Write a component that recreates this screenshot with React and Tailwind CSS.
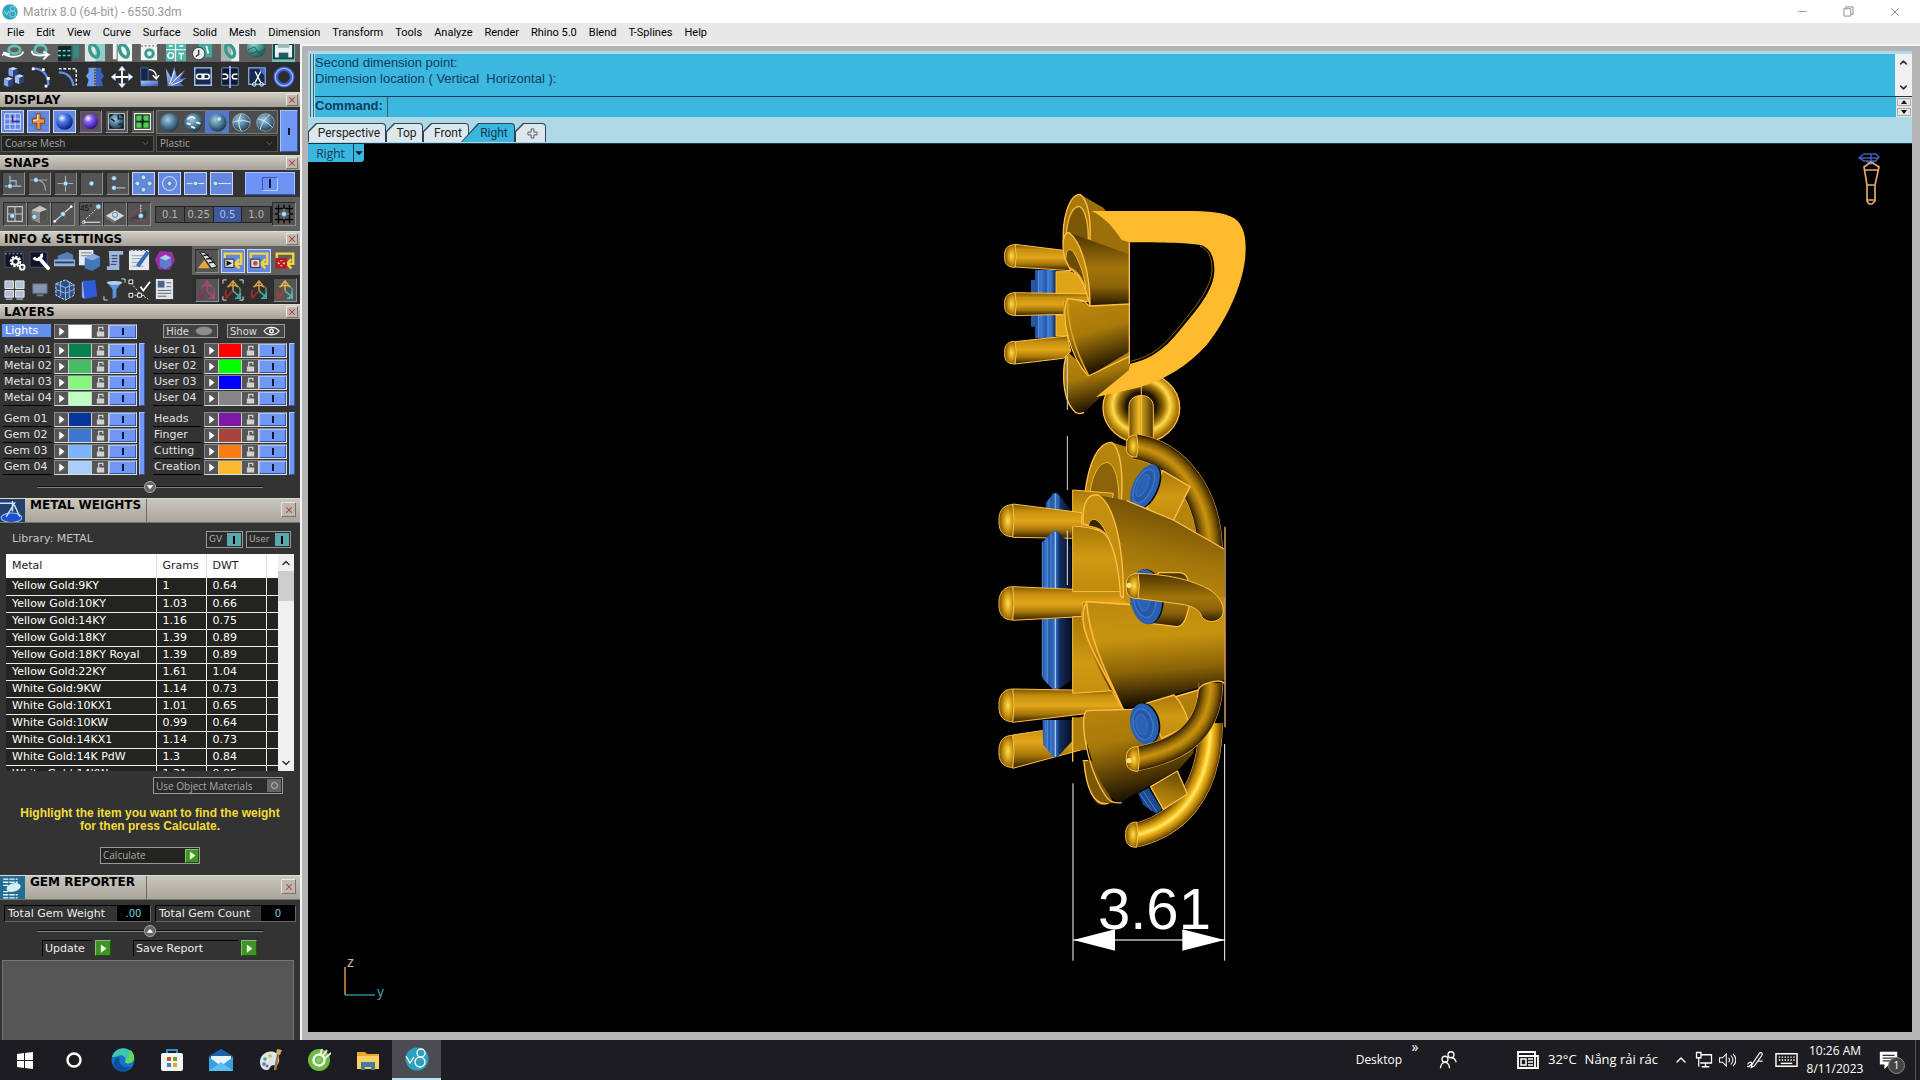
import React from 'react';
import clsx from 'clsx';
import { ChevronUp, ChevronDown, Minus, X } from 'lucide-react';

const menus = ['File', 'Edit', 'View', 'Curve', 'Surface', 'Solid', 'Mesh', 'Dimension', 'Transform', 'Tools', 'Analyze', 'Render', 'Rhino 5.0', 'Blend', 'T-Splines', 'Help'];

const metals = [
    ['Yellow Gold:9KY', '1', '0.64'],
    ['Yellow Gold:10KY', '1.03', '0.66'],
    ['Yellow Gold:14KY', '1.16', '0.75'],
    ['Yellow Gold:18KY', '1.39', '0.89'],
    ['Yellow Gold:18KY Royal', '1.39', '0.89'],
    ['Yellow Gold:22KY', '1.61', '1.04'],
    ['White Gold:9KW', '1.14', '0.73'],
    ['White Gold:10KX1', '1.01', '0.65'],
    ['White Gold:10KW', '0.99', '0.64'],
    ['White Gold:14KX1', '1.14', '0.73'],
    ['White Gold:14K PdW', '1.3', '0.84'],
    ['White Gold:14KW', '1.31', '0.85'],
];

const layerGroups = [
    [['Metal 01', 'bg-[#088050]'], ['Metal 02', 'bg-[#45bd62]'], ['Metal 03', 'bg-[#86f77a]'], ['Metal 04', 'bg-[#bfffc0]']],
    [['User 01', 'bg-[#ff0000]'], ['User 02', 'bg-[#00ff00]'], ['User 03', 'bg-[#0000f8]'], ['User 04', 'bg-[#858585]']],
    [['Gem 01', 'bg-[#06349a]'], ['Gem 02', 'bg-[#3c78d2]'], ['Gem 03', 'bg-[#7ab5fc]'], ['Gem 04', 'bg-[#aacdfc]']],
    [['Heads', 'bg-[#7c18a8]'], ['Finger', 'bg-[#a84440]'], ['Cutting', 'bg-[#f87c14]'], ['Creation', 'bg-[#fdb92c]']],
];

const Icon = ({ children, className = 'size-6' }) => (
    <svg viewBox="0 0 24 24" className={clsx('shrink-0', className)} fill="none" aria-hidden="true">{children}</svg>
);

const Dot = ({ x, y, r = 2.8 }) => <circle cx={x} cy={y} r={r} fill="#b5e4fa" stroke="#31586f" strokeWidth=".7" />;

const Ball = ({ children, fill = 'url(#steelBall)' }) => (
    <>
        <circle cx="12" cy="12" r="10.500" fill={fill} />
        {children}
    </>
);

// shared paints for the small toolbar icons
const IconPaints = () => (
    <svg className="absolute size-0" aria-hidden="true">
        <defs>
            <radialGradient id="steelBall" cx=".4" cy=".35" r=".7"><stop offset="0" stopColor="#a6cce0" /><stop offset=".5" stopColor="#527f9d" /><stop offset="1" stopColor="#19303f" /></radialGradient>
            <radialGradient id="blueBall" cx=".35" cy=".3" r=".75"><stop offset="0" stopColor="#fff" /><stop offset=".35" stopColor="#4a7af0" /><stop offset="1" stopColor="#081a70" /></radialGradient>
            <radialGradient id="violetBall" cx=".35" cy=".3" r=".75"><stop offset="0" stopColor="#fff" /><stop offset=".35" stopColor="#8a60f8" /><stop offset="1" stopColor="#2a0a90" /></radialGradient>
            <radialGradient id="tealBall" cx=".35" cy=".3" r=".8"><stop offset="0" stopColor="#8fd5cd" /><stop offset="1" stopColor="#0d4f4c" /></radialGradient>
            <linearGradient id="blueFace" x1="0" y1="0" x2="1" y2="1"><stop offset="0" stopColor="#a8c8fc" /><stop offset="1" stopColor="#3258b8" /></linearGradient>
        </defs>
    </svg>
);

const TealRing = ({ cx = 14 }) => (
    <ellipse cx={cx} cy="7" rx="4" ry="7" transform={`rotate(-25 ${cx} 8)`} stroke="#3a9a92" strokeWidth="3.5" />
);

const fileIcons = [
    ['Rotate ring', <><ellipse cx="13" cy="6" rx="6" ry="4" stroke="#5fc0b4" strokeWidth="3" /><path d="M2 8c0 7 19 7 20 0M3 9l-3 3M3 9l5 2" stroke="#fff" strokeWidth="2" /></>],
    ['Turn ring', <><ellipse cx="12" cy="6" rx="6" ry="5" stroke="#5fc0b4" strokeWidth="3" /><path d="M3 7c0 5 6 6 17 4l-5-3m5 3l-5 5" stroke="#fff" strokeWidth="2" /></>],
    ['Animation', <><path d="M2 2h14v16H2z" fill="#0c2b2b" /><path d="M2 7h14M2 12h14" stroke="#76d8cc" strokeWidth="1.5" strokeDasharray="3 2" /><path d="M18 1h6v14h-6z" fill="#2f8d87" /></>],
    ['New view', <><path d="M2 0h21v18H2z" fill="#8ed0c8" /><path d="M2 0h11v18H2z" fill="#dde5e3" /><TealRing cx={12} /></>],
    ['Views', <><path d="M3 0h4v16H3zM8 0h15v18H8z" fill="#eef5f3" /><TealRing cx={15} /></>],
    ['Page', <><path d="M4 0h17v17H4z" fill="#eef5f3" /><path d="M4 2h17" stroke="#444" strokeDasharray="2 2" /><ellipse cx="13" cy="10" rx="4" ry="4" stroke="#3a9a92" strokeWidth="3" /></>],
    ['Layout', <><path d="M2 0h21v18H2z" fill="#4fb5aa" /><path d="M2 6h21M12 0v18" stroke="#fff" strokeWidth="1.3" /><circle cx="7" cy="12" r="3" stroke="#fff" strokeWidth="1.5" /><path d="M15 10h6M18 10v6M5 2h4M16 2h4" stroke="#fff" strokeWidth="1.5" /></>],
    ['History', <><path d="M8 0h14v14H8z" fill="#3fa79c" /><circle cx="8" cy="10" r="6.5" fill="#e7eceb" stroke="#333" /><path d="M8 6v5l-3 2" stroke="#333" strokeWidth="1.4" /><path d="M16 2l2 8" stroke="#fff" strokeWidth="2" /></>],
    ['Catalog', <><path d="M3 0h19v18H3z" fill="#a9b6b4" /><path d="M14 0h8v18h-8z" fill="#e8efee" /><TealRing cx={13} /></>],
    ['Sphere', <><circle cx="12" cy="4" r="10" fill="url(#tealBall)" /><path d="M3 6l7-3 4 6 7-4M5 10l8-2 5 4" stroke="#0f5350" strokeWidth=".8" /></>],
    ['Save', <><path d="M0 0h24v20H0z" fill="#6ec2b8" /><path d="M2 0h20v15H2z" fill="#e6f4f2" stroke="#0e3c3c" strokeWidth="2" /><path d="M6 0h12v4H6z" fill="#9ab8b5" /><path d="M7 9h10v6H7z" fill="#1d5f5b" /></>],
];

const Cube = ({ x, y, c = '#7ea8f0' }) => (
    <g transform={`translate(${x} ${y})`}>
        <path d="M0 2l5-2 5 2-5 2z" fill="#c5d9fa" />
        <path d="M0 2l5 2v7l-5-2z" fill={c} />
        <path d="M10 2L5 4v7l5-2z" fill="#27438c" />
    </g>
);

const editIcons = [
    ['Blocks', <><Cube x={6} y={1} /><Cube x={1} y={12} /><Cube x={13} y={9} c="#a9bfe0" /></>],
    ['Arc', <><path d="M3 3c10-1 17 6 17 18" stroke="#5e90f4" strokeWidth="2.5" /><path d="M2 3h3M13 4h3M20 12v3M16 22h3" stroke="#fff" strokeWidth="3" /></>],
    ['Corner', <><path d="M2 3h19v18" stroke="#fff" strokeWidth="1.6" strokeDasharray="3 2" /><path d="M2 7c9 0 15 6 16 15" stroke="#5e90f4" strokeWidth="2.5" /></>],
    ['Mirror', <><path d="M11 2H5v5L2 11l3 4-2 7h8z" fill="#6f9cf7" /><path d="M13 2h6v5l3 4-3 4 2 7h-8z" fill="#3a60bc" /><path d="M12 2v20" stroke="#fff" strokeDasharray="2 1" /></>],
    ['Move', <><path d="M12 2v20M2 12h20" stroke="#fff" strokeWidth="2" /><path d="M12 0l4 5H8zM12 24l4-5H8zM0 12l5-4v8zM24 12l-5-4v8z" fill="#fff" stroke="#6f9cf7" strokeWidth=".5" /></>],
    ['Rotate', <><path d="M3 2h8v15H3z" fill="#14264e" stroke="#5c84dc" strokeWidth=".7" /><path d="M3 16h19v6H3z" fill="url(#blueFace)" /><path d="M12 4c5 0 8 3 8 9M16 10l4 4 3-4" stroke="#fff" strokeWidth="1.5" /></>],
    ['Explode', <><path d="M3 22L1 3l6 10L10 1l3 11 9-8-6 10 8-1-8 5 5 4z" fill="url(#blueFace)" /><path d="M5 20l5-14M6 20l12-12M7 21l12-5" stroke="#fff" strokeWidth="1" /></>],
    ['Join', <><path d="M3 2h18v19H3z" fill="#16284c" stroke="#a8c4fa" strokeWidth="1.5" /><rect x="5" y="9" width="8" height="5" rx="2.5" stroke="#fff" strokeWidth="1.7" /><rect x="11" y="9" width="8" height="5" rx="2.5" stroke="#fff" strokeWidth="1.7" /></>],
    ['Split', <><path d="M3 2h18v19H3z" fill="#0d182e" stroke="#7590c8" /><path d="M12 0v24" stroke="#8fb2fc" strokeWidth="2" /><path d="M4 9h3a2.5 2.5 0 010 5H4M20 9h-3a2.5 2.5 0 000 5h3" stroke="#fff" strokeWidth="1.7" /></>],
    ['Trim', <><path d="M3 2h18v18H3z" fill="#16284c" stroke="#8fb2fc" strokeWidth="1.3" /><path d="M14 3h7v9z" fill="#4c74ce" /><path d="M10 6l6 12M16 6l-6 12" stroke="#fff" strokeWidth="1.5" /><circle cx="9" cy="20" r="2" stroke="#fff" /><circle cx="17" cy="20" r="2" stroke="#fff" /></>],
    ['Torus', <><circle cx="12" cy="12" r="9" stroke="#3c62d4" strokeWidth="5" /><circle cx="12" cy="12" r="9.5" stroke="#a3bdfc" strokeWidth="1.3" /></>],
];

const displayIcons = [
    ['Grid', true, <><path d="M3 3h18v18H3zM3 9h18M3 15h18M9 3v18M15 3v18" stroke="#dbe8ff" strokeWidth="1" /><path d="M12 5v7h8" stroke="#4425a8" strokeWidth="1.5" /></>],
    ['Bead', true, <><path d="M2 8h20M2 16h20M8 2v20M16 2v20" stroke="#526cae" strokeWidth=".8" /><path d="M10 3h4v6h5v5h-5v7h-4v-7H5V9h5z" fill="#ed9646" stroke="#7b3a0b" /><path d="M11 4v6l-5 1" stroke="#fff" /></>],
    ['Shade', true, <circle cx="12" cy="12" r="9.500" fill="url(#blueBall)" />],
    ['Render shade', false, <><path d="M1 1h22v22H1z" stroke="#8a4e80" /><circle cx="12" cy="12" r="8.5" fill="url(#violetBall)" /></>],
    ['Environment', false, <><path d="M3 3h18v18H3z" fill="#101c28" stroke="#dfe3ea" /><circle cx="12" cy="12" r="8.500" fill="url(#steelBall)" /><path d="M14 4v5h5M14 15h5M6 9l4 3" stroke="#0c1824" strokeWidth="1.500" /></>],
    ['Tiles', false, <><path d="M3 3h18v18H3z" fill="#103b1c" stroke="#f0f4ea" strokeWidth="1.3" /><path d="M5 5h6v6H5zM13 5h6v6h-6zM5 13h6v6H5zM13 13h6v6h-6z" fill="#58c858" /><path d="M12 9v6M9 12h6" stroke="#072b10" strokeWidth="2" /></>],
];

const materials = [
    ['Matte', false, <Ball />],
    ['Glossy', false, <Ball><path d="M6 8c2-3 5-3 7-1M5 13l3 1M16 12l3 1M10 17l3 1" stroke="#e5f6ff" strokeWidth="2.2" strokeLinecap="round" /></Ball>],
    ['Smooth', true, <Ball><circle cx="14" cy="8" r="2" fill="#d0e4f8" /></Ball>],
    ['Wire', false, <Ball><path d="M2 12c6-3 14-3 20 0M12 2c-4 6-4 14 0 20" stroke="#d9e8f0" strokeWidth="1.1" /><circle cx="12" cy="12" r="10" stroke="#a9bcc8" strokeWidth=".8" /></Ball>],
    ['Wire X', false, <Ball><path d="M3 8c7 1 13 5 17 10M17 3C11 8 7 14 6 20" stroke="#d9e8f0" strokeWidth="1.1" /><circle cx="12" cy="12" r="10" stroke="#a9bcc8" strokeWidth=".8" /></Ball>],
];

const snapIcons = [
    ['Perpendicular', false, <><path d="M8 3v14M2 15h19M8 9h7v6" stroke="#9cc4d8" strokeWidth="1.3" /><Dot x={8} y={15} /></>],
    ['Tangent', false, <><path d="M2 8h19M8 8c7 0 11 5 11 12" stroke="#9aa6ac" strokeWidth="1.4" /><Dot x={8} y={8} /></>],
    ['Intersection', false, <><path d="M12 3v18M3 12h18" stroke="#a3b0b6" strokeWidth="1.3" /><Dot x={12} y={12} /></>],
    ['Point', false, <Dot x={12} y={12} />],
    ['Near', false, <><path d="M8 17h13" stroke="#a3b0b6" strokeWidth="1.5" /><Dot x={8} y={6} /><Dot x={8} y={17} /></>],
    ['Quad', true, <><circle cx="12" cy="12" r="7" stroke="#7a94cc" /><Dot x={12} y={5} /><Dot x={12} y={19} /><Dot x={5} y={12} /><Dot x={19} y={12} /></>],
    ['Center', true, <><circle cx="12" cy="12" r="8" stroke="#c2d4fc" strokeWidth="1.3" /><Dot x={12} y={12} /></>],
    ['Mid', true, <><path d="M2 12h20" stroke="#d5e0f8" strokeWidth="1.3" /><Dot x={12} y={12} /></>],
    ['End', true, <><path d="M5 12h18" stroke="#d5e0f8" strokeWidth="1.3" /><Dot x={5} y={12} /></>],
];

const snapIcons2 = [
    ['Ortho', <><path d="M4 4h16v16H4zM12 4v16M4 12h16" stroke="#c3cacd" strokeWidth="1.2" /><Dot x={9} y={14} /></>],
    ['Solid', <><path d="M4 8l9-5 8 4v11l-8 4-9-4z" fill="#8e8e8c" /><path d="M4 8l9-5 8 4-8 3z" fill="#c4c4c1" /><path d="M13 10v12l8-4V7z" fill="#515150" /><Dot x={7} y={15} /></>],
    ['Line snap', <><path d="M3 20L21 4" stroke="#dde4e6" strokeWidth="1.3" /><circle cx="3" cy="20" r="1.5" fill="#fff" /><circle cx="21" cy="4" r="1.5" fill="#fff" /><Dot x={12} y={12} /></>],
    ['45 degrees', <><path d="M4 20L20 4" stroke="#fff" strokeDasharray="2 2" /><path d="M4 21h18" stroke="#ddd" strokeWidth="1.3" /><text x="0" y="9" fontSize="9" fill="#111" fontFamily="Liberation Sans">45°</text><Dot x={20} y={4} /><circle cx="4" cy="21" r="1.6" stroke="#ddd" /></>],
    ['Plane', <><path d="M2 14l10-6 10 6-10 6z" fill="#d6d9da" /><path d="M2 14l10 6v3L2 16z" fill="#777" /><Dot x={12} y={13} /></>],
    ['Project', <><path d="M2 17l18-9v8L3 20z" fill="#3a4250" /><path d="M3 18l18 2M3 13l10-7" stroke="#b43a38" /><path d="M14 2v12" stroke="#fff" strokeDasharray="2 1" /><Dot x={14} y={14} /></>],
];

const infoIcons = [
    ['Settings', <><path d="M2 3h19v16H2z" fill="#101626" stroke="#44507a" /><path d="M2 5h19" stroke="#9ab" strokeDasharray="2 2" /><circle cx="13" cy="13" r="4.5" stroke="#fff" strokeWidth="3" strokeDasharray="2.2 1.2" /><circle cx="13" cy="13" r="3.3" stroke="#fff" strokeWidth="2" /><circle cx="20" cy="19" r="2.5" stroke="#fff" strokeWidth="2" /></>],
    ['Tools', <><path d="M2 3h18v16H2z" fill="#101626" stroke="#44507a" /><path d="M12 10l9 10" stroke="#fff" strokeWidth="4" strokeLinecap="round" /><path d="M6 9a4.500 4.500 0 008-4" stroke="#fff" strokeWidth="3" /></>],
    ['Machine', <><path d="M5 7l10-4 6 3v9H5z" fill="#587fb8" /><path d="M1 11h22v7H1z" fill="#93b0dc" /><path d="M2 14h20" stroke="#26406e" strokeWidth="2" /></>],
    ['Note box', <><path d="M1 1h15v16H1z" fill="#e4e8ef" /><path d="M3 4h11M3 7h11" stroke="#777" /><path d="M7 9l9-4 7 3v10l-8 5-8-3z" fill="#4777b8" /><path d="M7 9l9-4 7 3-8 4z" fill="#86afe0" /></>],
    ['Script', <><path d="M6 2h15v4h-4v16H4v-4h3z" fill="#9fb5dc" /><path d="M9 7h6M9 10h6M9 13h6M8 16h6" stroke="#22365e" /></>],
    ['Edit note', <><path d="M1 1h21v21H1z" fill="#e5eaf0" /><path d="M1 1h21" stroke="#555" strokeDasharray="2 2" strokeWidth="2" /><path d="M4 7h15M4 10h13M4 14h10M4 18h12" stroke="#96a0ab" /><path d="M21 3L10 18" stroke="#326bb8" strokeWidth="4" /></>],
    ['Gem box', <><path d="M2 11l5-9 13 1 3 9-6 10-11-1z" fill="#9c2ea8" /><path d="M7 9l6-3 6 3v8l-6 4-6-3z" fill="#5b7ed0" /><path d="M7 9l6-3 6 3-6 3z" fill="#b6c8f0" /></>],
];

const infoIcons2 = [
    ['Four views', <path d="M2 3h9v8H2zM13 3h9v8h-9zM2 13h9v7H2zM13 13h9v7h-9zM3 22h7M14 22h7" fill="#b3c0d5" stroke="#e9edf4" />],
    ['Monitor', <><path d="M5 6h15v10H5z" fill="#8795ad" stroke="#5a6578" /><path d="M9 17h7v2H9z" fill="#777" /></>],
    ['Mesh box', <><path d="M3 6l10-4 9 5v11l-9 5-10-5z" fill="#294c86" stroke="#d2e0f2" strokeDasharray="3 1" /><path d="M3 6l10 4 9-3M13 10v13M3 12l10 4 9-4M8 4v15M17 4v16" stroke="#9db9df" /></>],
    ['Book', <><path d="M5 3l13-1 2 17-13 3z" fill="#2e5bd8" /><path d="M5 3l2 19-3-2V5z" fill="#8fa8ee" /></>],
    ['Filter', <><path d="M4 4h16l-6 8v8l-4 2V12z" fill="#5c92dc" /><ellipse cx="12" cy="5" rx="8" ry="2" fill="#b3cff2" /><path d="M19 1h4v4M1 19v4h4" stroke="#ddd" /></>],
    ['Check points', <><path d="M3 5l10 12 8 5M3 18h14" stroke="#fff" strokeDasharray="2 2" /><path d="M1 2h4v4H1zM1 16h4v4H1zM10 16h4v4h-4z" fill="#222" stroke="#fff" /><path d="M13 9l3 4 7-9" stroke="#fff" strokeWidth="1.8" /></>],
    ['Report', <><path d="M3 1h18v21H3z" fill="#dfe4ea" /><path d="M5 3h7v7H5z" fill="#4a648c" /><path d="M14 5h5M14 9h5M5 13h14M5 16h14M5 19h9" stroke="#5c6672" /></>],
];

const Loop = ({ inner }) => (
    <>
        <path d="M3 9V4h18v11h-5M19 10l-5 5 5 5" stroke="#f6d43c" strokeWidth="2.600" />
        <path d="M3 10h10v9H3z" fill="#d8ddda" stroke="#222" />
        {inner}
    </>
);

const Gizmo = ({ c1, c2, c3 }) => (
    <>
        <path d="M12 13V3M8 7l4-5 4 5M6 9c2-3 10-3 12 0" stroke={c1} strokeWidth="1.6" />
        <path d="M12 13l-7 7M5 12c-2 3-1 8 1 9" stroke={c2} strokeWidth="1.8" />
        <path d="M12 13l8 7M20 15v6h-6M19 9c2 4 0 9-3 12" stroke={c3} strokeWidth="1.6" />
    </>
);

const Section = ({ title }) => (
    <div className="flex items-center justify-between h-[15px] pl-1 pr-0.5 bg-linear-to-b from-[#d0cdc5] to-[#a5a198] border-t border-[#e0ddd5]">
        <h2 className="text-[12px] leading-[14px] font-bold text-black">{title}</h2>
        <CloseButton label={`Close ${title}`} />
    </div>
);

const CloseButton = ({ label, big }) => (
    <button aria-label={label} className={clsx('flex items-center justify-center bg-[#beb9b0] border border-[#eae6dc] border-r-[#77736b] border-b-[#77736b]', big ? 'size-[15px]' : 'w-[12px] h-[12px]')}>
        <X className="size-[10px] text-[#b03a3a]" strokeWidth={2.5} />
    </button>
);

const Tool = ({ label, on, flat, className = 'w-[23px] h-[23px]', children }) => (
    <button
        aria-label={label}
        className={clsx('flex items-center justify-center shrink-0 overflow-hidden', className,
            !flat && 'border', !flat && (on ? 'bg-[#6488e0] border-[#c5d6fa]' : 'bg-[#545454] border-[#8e8e8e] border-t-[#2a2a2a] border-l-[#2a2a2a]'))}>
        {children}
    </button>
);

const OnButton = ({ className, label, mark = 'h-[7px]' }) => (
    <button aria-label={label} className={clsx('flex items-center justify-center bg-[#7197f4] border border-[#a9c2fb] border-r-[#3655a8] border-b-[#3655a8]', className)}>
        <span className={clsx('w-[2px] bg-[#0c1740]', mark)} />
    </button>
);

const LayerControls = ({ name, color }) => (
    <div className="flex h-[15px] border border-t-[#888] border-l-[#888] border-[#ddd]">
        <button aria-label={`Expand ${name}`} className="flex items-center justify-center w-[14px] bg-[#565656] border-r border-[#ccc]">
            <Icon className="size-[9px]"><path d="M6 1l14 11L6 23z" fill="#fff" /></Icon>
        </button>
        <button aria-label={`Colour of ${name}`} className={clsx('w-[23px] border-r border-[#ccc]', color)} />
        <button aria-label={`Lock ${name}`} className="flex items-center justify-center w-[17px] bg-[#565656] border-r border-[#ccc]">
            <Icon className="size-[11px]"><path d="M4 12h16v11H4z" fill="#d0d0d0" /><path d="M8 12V3h9v5" stroke="#d0d0d0" strokeWidth="3" /></Icon>
        </button>
        <OnButton label={`Show ${name}`} className="w-[27px]" />
    </div>
);

const LayerGroup = ({ rows }) => (
    <div className="flex gap-[2px]">
        <div>
            {rows.map(([name, color]) => (
                <div key={name} className="flex h-4 items-start gap-[2px]">
                    <span className="w-[49px] h-[15px] pl-px text-[11px] leading-[14px] text-[#e2e2e2] border-b border-black whitespace-nowrap">{name}</span>
                    <LayerControls name={name} color={color} />
                </div>
            ))}
        </div>
        <OnButton label="Toggle group" className="w-[6px] h-[63px]" mark="hidden" />
    </div>
);

const Slider = ({ up, label }) => (
    <div className="flex items-center justify-center h-[12px] px-[37px]">
        <span className="flex-1 h-[2px] bg-[#111] border-b border-[#808080]" />
        <button aria-label={label} className="flex items-center justify-center size-[12px] rounded-full bg-[#666] border border-[#aaa]">
            <Icon className="size-[8px]">{up ? <path d="M2 17h20L12 5z" fill="#fff" /> : <path d="M2 7h20L12 19z" fill="#fff" />}</Icon>
        </button>
        <span className="flex-1 h-[2px] bg-[#111] border-b border-[#808080]" />
    </div>
);

const PanelTitle = ({ title, children }) => (
    <div className="flex h-[25px] bg-linear-to-b from-[#c9c6be] to-[#aaa69d] border-y border-t-[#dddad2] border-b-[#77736b]">
        <div className="w-[25px] bg-[#24406c] overflow-hidden">{children}</div>
        <div className="flex flex-1 justify-between pl-[5px] pr-[4px]">
            <h2 className="w-[117px] text-[12px] leading-[12px] font-bold text-black whitespace-nowrap border-r border-[#6d6a64]">{title}</h2>
            <span className="pt-[3px]"><CloseButton big label={`Close ${title}`} /></span>
        </div>
    </div>
);

const GreenArrow = ({ className }) => (
    <span className={clsx('flex items-center justify-center bg-[#3f9428] border border-[#7fc46c] border-r-[#1e5410] border-b-[#1e5410]', className)}>
        <Icon className="size-[9px]"><path d="M5 1l15 11L5 23z" fill="#e6ffd8" /></Icon>
    </span>
);

const Sidebar = () => (
    <aside className="flex flex-col w-[300px] shrink-0 overflow-hidden bg-[#333] font-['DejaVu_Sans',Verdana,sans-serif]">
        <div className="flex h-[18px] bg-[#5f5f5f] overflow-hidden">
            {fileIcons.map(([label, art]) => (
                <Tool key={label} label={label} flat className="w-[27px] h-[18px] items-start"><Icon className="size-[23px]">{art}</Icon></Tool>
            ))}
        </div>
        <div className="flex items-center h-[30px] bg-[#2d2d2d]">
            {editIcons.map(([label, art]) => (
                <Tool key={label} label={label} flat className="w-[27px] h-[24px]"><Icon className="size-[22px]">{art}</Icon></Tool>
            ))}
        </div>

        <Section title="DISPLAY" />
        <div className="flex gap-[2px] h-[48px] px-px py-[3px]">
            <div className="flex flex-col justify-between w-[153px]">
                <div className="flex justify-between">
                    {displayIcons.map(([label, on, art]) => (
                        <Tool key={label} label={label} on={on}><Icon className="size-[21px]">{art}</Icon></Tool>
                    ))}
                </div>
                <MiniSelect label="Mesh quality" value="Coarse Mesh" />
            </div>
            <div className="flex flex-col justify-between w-[122px]">
                <div className="flex bg-[#4d4d4d] border border-[#777]">
                    {materials.map(([label, on, art]) => (
                        <Tool key={label} label={label} flat className={clsx('w-[24px] h-[22px]', on && 'bg-[#5377cc]')}><Icon className="size-[21px]">{art}</Icon></Tool>
                    ))}
                </div>
                <MiniSelect label="Material" value="Plastic" />
            </div>
            <OnButton label="Display on" className="w-[18px]" />
        </div>

        <Section title="SNAPS" />
        <div className="flex items-center gap-[3px] h-[27px] pl-[2px] pr-[5px]">
            {snapIcons.map(([label, on, art]) => (
                <Tool key={label} label={label} on={on}><Icon className="size-[21px]">{art}</Icon></Tool>
            ))}
            <button aria-label="Snaps on" className="flex items-center justify-center w-[50px] h-[23px] ml-auto bg-[#6b92f4] border border-[#a9c2fb] border-b-[#3655a8]">
                <span className="flex items-center justify-center w-[16px] h-[14px] border border-[#3556b4] border-r-[#b9cdfc] border-b-[#b9cdfc]">
                    <span className="w-[2px] h-[9px] bg-[#0c1740]" />
                </span>
            </button>
        </div>
        <div className="flex items-center h-[34px] pl-[3px] pr-[4px] bg-[#606060]">
            {snapIcons2.map(([label, art], i) => (
                <Tool key={label} label={label} className={clsx('w-[24px] h-[24px]', i === 3 && 'ml-[4px]')}><Icon className="size-[22px]">{art}</Icon></Tool>
            ))}
            <div className="flex flex-1 h-[17px] ml-[4px] border border-[#222]">
                {['0.1', '0.25', '0.5', '1.0'].map((step) => (
                    <button key={step} className={clsx('flex-1 text-[10px] leading-[15px] border-r border-[#222]', step === '0.5' ? 'bg-[#3f5a9c] text-[#a8bcec]' : 'bg-[#4a4a4a] text-[#b5b5b5]')}>{step}</button>
                ))}
            </div>
            <Tool label="Grid snap" className="w-[24px] h-[24px]">
                <Icon className="size-[22px]"><path d="M6 2v20M12 2v20M18 2v20M2 6h20M2 12h20M2 18h20" stroke="#000" strokeWidth="1.5" /><path d="M12 6v12M6 12h12" stroke="#bde0f0" /><Dot x={12} y={12} /></Icon>
            </Tool>
        </div>

        <Section title="INFO & SETTINGS" />
        <div className="flex h-[58px]">
            <div className="flex flex-col justify-around flex-1 pl-[2px]">
                {[infoIcons, infoIcons2].map((row, i) => (
                    <div key={i} className="flex">
                        {row.map(([label, art]) => (
                            <Tool key={label} label={label} flat className="w-[25px] h-[26px]"><Icon className="size-[23px]">{art}</Icon></Tool>
                        ))}
                    </div>
                ))}
            </div>
            <div className="flex flex-col w-[108px]">
                <div className="flex items-center h-[29px] gap-[2px] px-[3px] bg-[#606060]">
                    <Tool label="Sweep" className="w-[24px] h-[24px]"><Icon className="size-[22px]"><path d="M4 2l6 1 13 15-6 2z" fill="#ddd" stroke="#111" /><path d="M8 6l6-1M11 10l6-1M14 14l6-1" stroke="#111" strokeWidth="1.500" /><path d="M2 20l7-9 6 9z" fill="#e8a640" /></Icon></Tool>
                    <Tool label="Play macro" on className="w-[24px] h-[24px]"><Icon className="size-[22px]"><Loop inner={<path d="M5 11.500l6 3-6 3z" fill="#111" />} /></Icon></Tool>
                    <Tool label="Record macro" on className="w-[24px] h-[24px]"><Icon className="size-[22px]"><Loop inner={<circle cx="8" cy="14.500" r="2.500" fill="#e03c40" />} /></Icon></Tool>
                    <Tool label="Stop macro" flat className="w-[24px] h-[24px]"><Icon className="size-[22px]"><Loop inner={<path d="M3 10h10v9H3zl10 9M13 10L3 19" stroke="#c01818" strokeWidth="2.500" />} /></Icon></Tool>
                </div>
                <div className="flex items-center h-[29px] gap-[2px] px-[3px] bg-[#2f2f2f]">
                    <Tool label="Gizmo off" className="w-[24px] h-[24px]"><Icon className="size-[22px]"><Gizmo c1="#a84878" c2="#8c2c60" c3="#a84878" /></Icon></Tool>
                    <Tool label="Gizmo bounds" flat className="w-[24px] h-[24px]"><Icon className="size-[22px]"><path d="M1 5V1h4M19 1h4v4M1 19v4h4M23 19v4h-4" stroke="#eee" /><Gizmo c1="#d8a040" c2="#b02828" c3="#4aa8a0" /></Icon></Tool>
                    <Tool label="Gizmo origin" flat className="w-[24px] h-[24px]"><Icon className="size-[22px]"><Gizmo c1="#d8a040" c2="#b02828" c3="#4aa8a0" /></Icon></Tool>
                    <Tool label="Gizmo on" className="w-[24px] h-[24px]"><Icon className="size-[22px]"><Gizmo c1="#e0b050" c2="#b83a30" c3="#5ab0a8" /></Icon></Tool>
                </div>
            </div>
        </div>

        <Section title="LAYERS" />
        <div className="h-[179px] pt-[5px]">
            <div className="flex items-start h-[19px] pl-[2px] pr-[15px]">
                <span className="w-[49px] h-[13px] mr-[3px] pl-[3px] text-[11px] leading-[13px] text-white bg-[#6590ec]">Lights</span>
                <LayerControls name="Lights" color="bg-white" />
                <button className="flex items-center gap-[6px] h-[14px] ml-auto pl-[2px] pr-[4px] text-[10px] text-[#ddd] bg-[#444] border border-[#999]">
                    Hide <Icon className="w-[18px] h-[10px]"><ellipse cx="12" cy="12" rx="20" ry="10" fill="#8c8c8c" /></Icon>
                </button>
                <button className="flex items-center gap-[6px] h-[14px] ml-[9px] pl-[2px] pr-[4px] text-[10px] text-[#ddd] bg-[#444] border border-[#999]">
                    Show <Icon className="w-[17px] h-[10px] overflow-visible"><path d="M-6 12C2 0 22 0 30 12 22 24 2 24-6 12z" stroke="#fff" strokeWidth="3" /><circle cx="12" cy="12" r="6" fill="#fff" /><circle cx="12" cy="12" r="2.500" fill="#222" /></Icon>
                </button>
            </div>
            <div className="grid grid-cols-[150px_1fr] gap-y-[5px] pl-[3px]">
                {layerGroups.map((rows) => <LayerGroup key={rows[0][0]} rows={rows} />)}
            </div>
            <div className="pt-[5px]"><Slider label="Expand layers" /></div>
        </div>

        <PanelTitle title="METAL WEIGHTS">
            <Icon className="size-[25px]"><ellipse cx="11" cy="18" rx="10" ry="4.500" fill="#1b50c8" stroke="#9ac0f5" /><path d="M0 4h14l-8 13M13 4l6 13M12 2v10" stroke="#c9e2ff" strokeWidth="1.400" /></Icon>
        </PanelTitle>
        <div className="flex flex-col h-[352px]">
            <div className="flex items-center h-[17px] mt-[8px] pl-[12px] pr-[9px] text-[10px] text-[#c5c5c5]">
                <span className="mr-auto text-[11px]">Library: METAL</span>
                <ToggleBox label="GV" className="w-[37px]" />
                <ToggleBox label="User" className="w-[45px] ml-[3px]" />
            </div>
            <div className="flex h-[217px] mt-[6px] mx-[6px] overflow-hidden bg-[#23231f]">
                <table className="w-[272px] table-fixed border-collapse self-start text-left text-[11px] text-white">
                    <colgroup><col className="w-[150px]" /><col className="w-[50px]" /><col className="w-[60px]" /><col /></colgroup>
                    <thead>
                        <tr className="h-6 bg-white text-[#222]">
                            <th className="pl-[6px] font-normal border-r border-[#ddd]">Metal</th>
                            <th className="pl-[6px] font-normal border-r border-[#ddd]">Grams</th>
                            <th className="pl-[6px] font-normal border-r border-[#ddd]">DWT</th>
                            <th aria-label="Blank" />
                        </tr>
                    </thead>
                    <tbody>
                        {metals.map((row) => (
                            <tr key={row[0]} className="h-[17px] leading-[16px] border-b border-[#eee]">
                                {row.map((cell, i) => <td key={i} className="pl-[6px] whitespace-nowrap border-r border-[#eee]">{cell}</td>)}
                                <td />
                            </tr>
                        ))}
                    </tbody>
                </table>
                <div className="flex flex-col items-center w-[16px] bg-[#f0f0f0]">
                    <button aria-label="Scroll up" className="h-[17px]"><ChevronUp className="size-[12px] text-[#333]" strokeWidth={3} /></button>
                    <span className="w-full h-[30px] bg-[#cdcdcd]" />
                    <button aria-label="Scroll down" className="h-[17px] mt-auto"><ChevronDown className="size-[12px] text-[#333]" strokeWidth={3} /></button>
                </div>
            </div>
            <button className="flex items-center justify-between self-end w-[130px] h-[17px] mt-[6px] mr-[17px] pl-[2px] text-[10px] leading-[14px] text-[#aaa] bg-[#2b2b2b] border border-[#999] font-['Open_Sans',sans-serif]">
                Use Object Materials
                <span className="flex items-center justify-center w-[14px] h-[13px] mr-px bg-[#666]"><span className="size-[7px] rounded-full border border-[#bbb]" /></span>
            </button>
            <p className="mt-[13px] text-center text-[12px] leading-[13px] font-bold text-[#f2dc3c] font-['Liberation_Sans',Arial,sans-serif]">
                Highlight the item you want to find the weight<br />for then press Calculate.
            </p>
            <button className="flex items-center justify-between self-center w-[100px] h-[17px] mt-[14px] pl-[2px] text-[10px] text-[#aaa] bg-[#23231f] border border-[#999] font-['Open_Sans',sans-serif]">
                Calculate <GreenArrow className="w-[14px] h-[14px]" />
            </button>
        </div>

        <PanelTitle title="GEM REPORTER">
            <Icon className="size-[25px]"><path d="M0 0h24v24H0z" fill="#226d96" /><path d="M3 3h14M3 6h14M3 9h6M3 15h5M3 18h14M3 21h14" stroke="#e8f8ff" strokeWidth="1.400" strokeDasharray="5 1" /><ellipse cx="13" cy="11" rx="7" ry="4" transform="rotate(-15 13 11)" fill="#d5eef4" /></Icon>
        </PanelTitle>
        <div className="flex flex-col flex-1">
            <div className="flex gap-[4px] h-[17px] mt-[5px] px-[4px] text-[11px] leading-[16px] text-[#eee]">
                <div className="flex justify-between flex-1 pl-[3px] border border-[#666] border-t-black border-l-black whitespace-nowrap">Total Gem Weight<output className="w-[33px] text-center text-[10px] text-[#76d6dc] bg-black">.00</output></div>
                <div className="flex justify-between w-[141px] pl-[3px] border border-[#666] border-t-black border-l-black whitespace-nowrap">Total Gem Count<output className="w-[34px] text-center text-[10px] text-[#76d6dc] bg-black">0</output></div>
            </div>
            <div className="pt-[3px]"><Slider up label="Collapse totals" /></div>
            <div className="flex h-[17px] mt-[3px] pl-[42px] text-[11px] leading-[16px] text-[#eee]">
                <button className="flex"><span className="w-[50px] h-[16px] pl-[2px] text-left border-l border-t border-black">Update</span><GreenArrow className="size-4 ml-[3px]" /></button>
                <button className="flex ml-[22px]"><span className="w-[105px] h-[16px] pl-[2px] text-left border-l border-t border-black">Save Report</span><GreenArrow className="size-4 ml-[3px]" /></button>
            </div>
            <div className="flex-1 mt-[3px] ml-[2px] mr-[6px] bg-[#555] border border-b-0 border-[#777]" />
        </div>
    </aside>
);

const MiniSelect = ({ label, value }) => (
    <div className="relative">
        <select aria-label={label} defaultValue={value} className="block w-full h-[17px] pl-[3px] appearance-none text-[10px] text-[#a5a5a5] bg-[#23231f] border border-[#555] font-['Open_Sans',sans-serif]">
            <option>{value}</option>
        </select>
        <ChevronDown className="absolute right-[4px] top-[4px] size-[9px] text-[#777] pointer-events-none" />
    </div>
);

const ToggleBox = ({ label, className }) => (
    <button className={clsx('flex items-center justify-between h-[17px] pl-[2px] text-[9px] text-[#aaa] bg-[#2b2b2b] border border-[#999]', className)}>
        {label}
        <span className="flex items-center justify-center w-[14px] h-[13px] mr-px bg-[#58a8ac]"><span className="w-[2px] h-[8px] bg-black" /></span>
    </button>
);

const Tab = ({ children, active, className }) => (
    <button className={clsx('h-[19px] p-px bg-[#2c4350] rounded-tr-[4px]', className,
        active ? '[clip-path:polygon(17px_0,100%_0,100%_100%,0_100%)] -ml-[8px] w-[54px]' : '[clip-path:polygon(8px_0,100%_0,100%_100%,0_100%,0_8px)]')}>
        <span className={clsx('flex items-center justify-center h-[18px] rounded-tr-[3px]',
            active ? 'pl-[12px] bg-[#3bb6df] text-[#0d3b55] [clip-path:polygon(17px_0,100%_0,100%_100%,0_100%)]' : 'pl-[4px] bg-[#dce8ed] text-[#222] [clip-path:polygon(8px_0,100%_0,100%_100%,0_100%,0_8px)]')}>
            {children}
        </span>
    </button>
);

const dullGold = ['#3a2600', '#543a02', '#6a4a05', '#7f5a07', '#936909', '#a5770b', '#b5830d', '#c48f0f'];
const brightGold = ['#6a4800', '#8a6106', '#a87709', '#c28b0e', '#d69d13', '#e6ae1a', '#f3c52c', '#ffe05a'];

// a bent wire, shaded by strokes of falling width
const Tube = ({ d, w = 72, bright }) => (
    <g fill="none">
        <path d={d} stroke="#f0b040" strokeWidth={w + 3} />
        {(bright ? brightGold : dullGold).map((tone, i) => (
            <path key={tone} d={d} stroke={tone} strokeWidth={w * (1 - i * 0.125)} />
        ))}
    </g>
);

const Cap = ({ x, y, h = 36, w = 30 }) => (
    <path d={`M${x} ${y - h}C${x - w} ${y - h} ${x - w - 4} ${y - 14} ${x - w - 3} ${y}C${x - w - 4} ${y + 18} ${x - w} ${y + h} ${x} ${y + h}Q${x + 8} ${y} ${x} ${y - h}z`} fill="url(#cap)" stroke="#ffc04a" strokeWidth="3" />
);

const Stone = ({ x, y, rx, ry, turn }) => (
    <g transform={`rotate(${turn} ${x} ${y})`}>
        <ellipse cx={x + 5} cy={y} rx={rx} ry={ry} fill="#050a18" />
        <ellipse cx={x} cy={y} rx={rx} ry={ry} fill="#2a60b2" />
        <ellipse cx={x - 4} cy={y} rx={rx * 0.7} ry={ry * 0.75} fill="#2658a6" stroke="#3f77c8" strokeWidth="4" />
        <ellipse cx={x - 8} cy={y} rx={rx * 0.4} ry={ry * 0.5} fill="#2c62b4" stroke="#3a70c0" strokeWidth="3" />
    </g>
);

const Pendant = () => (
    <svg viewBox="0 0 870 2370" className="absolute left-[672px] top-[36px] w-[290px] h-[790px]" role="img" aria-label="Pendant, right view">
        <defs>
            <linearGradient id="rod" x1="0" y1="0" x2="0" y2="1"><stop offset="0" stopColor="#7a5400" /><stop offset=".2" stopColor="#c48d0e" /><stop offset=".5" stopColor="#e2a61a" /><stop offset=".75" stopColor="#a87709" /><stop offset="1" stopColor="#2c1c00" /></linearGradient>
            <radialGradient id="cap" cx=".6" cy=".5" r=".6"><stop offset="0" stopColor="#ffe050" /><stop offset=".5" stopColor="#cf9612" /><stop offset="1" stopColor="#6e4b00" /></radialGradient>
            <linearGradient id="plate" x1="0" y1="0" x2="0" y2="1"><stop offset="0" stopColor="#a87808" /><stop offset=".5" stopColor="#d09a12" /><stop offset="1" stopColor="#c08a0d" /></linearGradient>
            <linearGradient id="coneUp" x1="0" y1="0" x2="0" y2="1"><stop offset="0" stopColor="#4a3300" /><stop offset=".5" stopColor="#a4760a" /><stop offset=".75" stopColor="#8a6208" /><stop offset="1" stopColor="#2a1c00" /></linearGradient>
            <linearGradient id="coneDown" x1="0" y1="0" x2=".25" y2="1"><stop offset="0" stopColor="#c08a0c" /><stop offset=".5" stopColor="#a87a0a" /><stop offset="1" stopColor="#1c1200" /></linearGradient>
            <linearGradient id="band" x1=".3" y1="0" x2=".05" y2="1"><stop offset="0" stopColor="#6e4d04" /><stop offset=".45" stopColor="#a0740a" /><stop offset="1" stopColor="#c9930f" /></linearGradient>
            <linearGradient id="belly" x1="0" y1="0" x2=".1" y2="1"><stop offset="0" stopColor="#b98710" /><stop offset=".4" stopColor="#c8940f" /><stop offset=".7" stopColor="#8a6308" /><stop offset="1" stopColor="#150d00" /></linearGradient>
            <linearGradient id="gem" x1="0" y1="0" x2="1" y2="0"><stop offset="0" stopColor="#1d4a94" /><stop offset=".12" stopColor="#3f78cc" /><stop offset=".2" stopColor="#2459a8" /><stop offset=".4" stopColor="#3468b8" /><stop offset=".5" stopColor="#2a60b4" /><stop offset=".58" stopColor="#142f60" /><stop offset="1" stopColor="#060e22" /></linearGradient>
            <linearGradient id="gemTop" x1="0" y1="0" x2="1" y2="0"><stop offset="0" stopColor="#1d4a94" /><stop offset=".3" stopColor="#3f78cc" /><stop offset=".5" stopColor="#2459a8" /><stop offset=".75" stopColor="#3f7ad0" /><stop offset="1" stopColor="#0c1f44" /></linearGradient>
            <linearGradient id="stem" x1="0" y1="0" x2="1" y2="0"><stop offset="0" stopColor="#6a4900" /><stop offset=".4" stopColor="#f0b828" /><stop offset="1" stopColor="#4a3200" /></linearGradient>
            <radialGradient id="ring" cx=".5" cy=".47" r=".55"><stop offset=".35" stopColor="#1c1200" /><stop offset=".55" stopColor="#a4760a" /><stop offset=".68" stopColor="#ffdb4c" /><stop offset=".82" stopColor="#c08b0d" /><stop offset="1" stopColor="#5c4000" /></radialGradient>
        </defs>

        {/* bail */}
        <g strokeLinejoin="round">
            <ellipse cx="484" cy="683" rx="115" ry="105" fill="url(#ring)" stroke="#ffc04a" strokeWidth="4" />
            <path d="M447 780V680C447 635 520 635 520 680V780z" fill="url(#stem)" stroke="#ffc04a" strokeWidth="3" />
            <path d="M484 600V780" stroke="#ffc04a" strokeWidth="3" />
            <path d="M250 190C246 120 265 45 300 43L370 83 450 190V230L330 200z" fill="#9c7008" />
            <path d="M250 190C246 120 265 45 300 43 325 60 333 120 330 180" fill="#a97a0a" stroke="#ffc04a" strokeWidth="4" />
            <path d="M258 170C262 105 282 76 300 80 316 90 325 130 325 178" fill="#7c5706" stroke="#f0b838" strokeWidth="4" />
            <path d="M335 93H640C710 95 750 102 772 122 797 148 800 190 795 240 785 320 740 420 680 495 620 560 560 595 490 618L348 651 447 570 450 552C520 535 560 500 600 450 650 390 703 330 703 270 703 230 690 205 665 196 620 187 520 188 447 187L425 180C400 140 370 110 335 93z" fill="#fdbb2d" />
            <path d="M452 544C520 527 548 500 592 447 642 385 696 325 696 265 696 232 684 208 660 198" fill="none" stroke="#8a6208" strokeWidth="3" />
            <path d="M153 300H168V440H153z" fill="#2658a4" />
            <path d="M165 270H228V475H165z" fill="url(#gemTop)" />
            <path d="M176 272V472M204 272V472" stroke="#5a94e4" strokeWidth="3" />
            <path d="M228 275H270C300 285 322 310 328 340H228zM228 405H258L265 468H228z" fill="#dda416" stroke="#ffc04a" strokeWidth="3" />
            <path d="M105 193L250 211 272 272 105 261z" fill="url(#rod)" stroke="#ffc04a" strokeWidth="3" /><Cap x={105} y={228} h={34} w={28} />
            <path d="M105 338L325 342V365H252V403L105 407z" fill="url(#rod)" stroke="#ffc04a" strokeWidth="3" /><Cap x={105} y={372} h={34} w={28} />
            <path d="M262 515C245 560 245 650 278 688 288 703 303 702 312 697L447 575V500L325 570z" fill="url(#coneDown)" />
            <path d="M262 515C245 560 245 650 278 688 288 703 303 702 312 697" fill="none" stroke="#ffc04a" strokeWidth="4" />
            <path d="M348 651L447 570 449 552 520 560 480 622z" fill="#fdbb2d" />
            <path d="M105 485L262 468 272 515 250 535 105 552z" fill="url(#rod)" stroke="#ffc04a" strokeWidth="3" /><Cap x={105} y={518} h={34} w={28} />
            <path d="M268 158L447 223V370L330 375C330 300 310 200 268 158z" fill="url(#coneUp)" />
            <path d="M254 235C244 190 250 156 268 158 308 190 330 290 330 375 318 330 302 280 270 268z" fill="#c08a0d" stroke="#ffc04a" strokeWidth="4" />
            <path d="M258 240C256 205 272 200 284 222 300 250 314 290 318 325 305 290 290 270 268 262z" fill="#6c4b04" stroke="#f0b838" strokeWidth="3" />
            <path d="M262 356C285 364 310 362 328 378L447 372V515L325 590C285 540 250 440 250 385 250 370 254 358 262 356z" fill="url(#coneDown)" />
            <path d="M447 372L328 378 310 362 262 356C240 410 270 530 325 588L447 530" fill="none" stroke="#ffc04a" strokeWidth="4" />
            <path d="M262 358C262 440 290 520 325 585" fill="none" stroke="#e0a31c" strokeWidth="5" />
            <path d="M448 187V552" stroke="#f8c06c" strokeWidth="4" />
            <path d="M262 530V690M262 768V930" stroke="#d8d8d8" strokeWidth="3" />
        </g>

        {/* drop, upper half */}
        <g transform="translate(0 750)" strokeLinejoin="round">
            <path d="M315 190C325 100 355 35 395 37L470 60 600 150 660 320 420 230z" fill="#a87a0a" />
            <path d="M315 190C325 100 355 35 395 37 422 55 430 130 424 215" fill="#b5840c" stroke="#ffc04a" strokeWidth="4" />
            <path d="M330 185C342 115 365 95 385 98 410 112 416 160 417 212" fill="#8a6207" stroke="#f0b838" strokeWidth="3" />
            <path d="M600 160C650 210 662 280 655 325L560 290z" fill="#b5840c" stroke="#ffc04a" strokeWidth="3" />
            <Tube d="M465 50C590 68 690 190 690 370" w={74} />
            <Cap x={470} y={48} w={28} h={33} />
            <path d="M548 122L630 170 578 276 500 235z" fill="url(#plate)" stroke="#ffc04a" strokeWidth="4" />
            <Stone x={495} y={170} rx={36} ry={72} turn={25} />
            <path d="M278 180L400 190 380 300H278z" fill="url(#plate)" stroke="#ffc04a" strokeWidth="3" />
            <path d="M197 220L220 190H232L275 242V260H197z" fill="url(#gem)" />
            <path d="M226 190V240" stroke="#7ab0f0" strokeWidth="3" />
            <path d="M98 222L305 248V288L275 325 98 322z" fill="url(#rod)" stroke="#ffc04a" strokeWidth="3" /><Cap x={98} y={272} h={48} w={38} />
            <path d="M187 335L220 302H232L275 350V475H187zM187 565H275V750L232 780H220L187 745z" fill="url(#gem)" />
            <path d="M226 305V475M226 565V775" stroke="#9cc8fa" strokeWidth="4" />
            <path d="M187 335V475M203 325V475M213 312V475M187 565V740M203 565V760" stroke="#5590e2" strokeWidth="3" />
            <path d="M98 470L448 485V522L310 517 305 560 98 571z" fill="url(#rod)" stroke="#ffc04a" strokeWidth="3" /><Cap x={98} y={520} h={50} w={38} />
            <path d="M278 288C330 292 380 298 395 340 414 390 420 440 422 485H278z" fill="url(#plate)" stroke="#ffc04a" strokeWidth="3" />
            <path d="M278 560H315L430 838 278 790z" fill="url(#plate)" />
            <path d="M278 790V560H315" fill="none" stroke="#ffc04a" strokeWidth="3" />
            <path d="M355 195L440 212 580 270 732 357V520L440 520 425 500C425 380 410 250 355 195z" fill="url(#band)" />
            <path d="M440 212L580 270 732 357" fill="none" stroke="#ffc04a" strokeWidth="4" />
            <path d="M310 282C306 215 325 190 355 195 400 222 432 340 430 503L422 500C416 420 408 370 385 325 370 300 345 290 310 282z" fill="#c48e0e" stroke="#ffc04a" strokeWidth="4" />
            <path d="M325 288C330 255 360 260 383 320 370 298 350 292 325 288z" fill="#3a2700" stroke="#f0b838" strokeWidth="3" />
            <path d="M320 515L450 522 734 500V750L430 838C370 760 305 620 305 550 306 530 312 517 320 515z" fill="url(#belly)" />
            <path d="M450 524L320 515C296 560 310 610 360 705L430 838M320 520C330 640 385 740 428 835" fill="none" stroke="#ffb93a" strokeWidth="5" />
            <path d="M535 428H600C620 432 624 445 624 455L628 525C620 570 605 590 590 590L510 580z" fill="url(#coneUp)" stroke="#ffc04a" strokeWidth="4" />
            <Stone x={498} y={500} rx={48} ry={83} turn={-6} />
            <path d="M470 430C560 432 640 450 690 480 722 500 735 530 728 555 715 580 680 580 665 560 660 540 640 528 600 522L470 505z" fill="url(#coneUp)" stroke="#ffc04a" strokeWidth="3" />
            <Cap x={474} y={468} h={38} w={32} />
            <circle cx="447" cy="466" r="8" fill="#ffe27a" />
            <path d="M262 302V465" stroke="#e4e4e4" strokeWidth="3" />
        </g>

        {/* drop, lower half */}
        <g transform="translate(0 1380)" strokeLinejoin="round">
            <path d="M98 285L185 272 320 228V325L98 385z" fill="url(#rod)" stroke="#ffc04a" strokeWidth="3" /><Cap x={98} y={334} h={48} w={38} />
            <path d="M187 240H275V305L232 352H220L190 315z" fill="url(#gem)" />
            <path d="M226 240V350" stroke="#9cc8fa" strokeWidth="4" />
            <path d="M203 240V330M213 240V342" stroke="#5590e2" strokeWidth="3" />
            <path d="M98 147L278 150V160L395 152 428 208 98 247z" fill="url(#rod)" stroke="#ffc04a" strokeWidth="3" /><Cap x={98} y={196} h={49} w={38} />
            <path d="M278 232H320V330H278z" fill="#b07e0a" />
            <path d="M278 232V365" stroke="#ffc04a" strokeWidth="4" />
            <path d="M310 362C318 440 340 497 368 495L400 488 340 362z" fill="#7c5706" />
            <path d="M308 362H325M312 365C318 440 340 500 385 490" fill="none" stroke="#ffc04a" strokeWidth="4" />
            <path d="M320 212L455 208 655 150 640 340 600 385 420 488C360 470 310 300 310 235z" fill="url(#coneDown)" />
            <path d="M455 208L320 212C296 230 320 380 375 465 390 488 405 490 425 488M455 208L655 150" fill="none" stroke="#ffc04a" strokeWidth="4" />
            <path d="M498 190L582 165C608 190 620 225 628 255L545 295z" fill="url(#plate)" stroke="#ffc04a" strokeWidth="4" />
            <path d="M655 150C655 190 645 215 628 250" fill="none" stroke="#ffc04a" strokeWidth="4" />
            <Stone x={493} y={252} rx={42} ry={62} turn={-12} />
            <Tube d="M465 586C580 560 690 470 692 250" w={70} bright />
            <Cap x={470} y={584} h={38} w={30} />
            <Tube d="M465 358C580 335 690 290 693 130" w={70} />
            <path d="M655 150C660 130 720 115 733 130" fill="none" stroke="#ffc04a" strokeWidth="4" />
            <Cap x={474} y={357} h={37} w={32} />
            <circle cx="447" cy="362" r="8" fill="#ffe27a" />
            <path d="M512 440L592 393 622 462 550 508z" fill="url(#band)" stroke="#ffc04a" strokeWidth="4" />
            <path d="M474 460L505 444 546 508 530 522 490 495z" fill="#1c488e" />
            <path d="M480 462L515 512M490 454L530 515" stroke="#4a82d0" strokeWidth="3" />
            <path d="M735 -340V262" stroke="#f0b070" strokeWidth="4" />

            <path d="M279 430V962M280 900H735" stroke="#bdbdbd" strokeWidth="4" />
            <path d="M734 312V962" stroke="#fff" strokeWidth="3" />
            <path d="M280 900L405 868V932zM734 900L607 868V932z" fill="#fff" />
            <text x="354" y="868" fontSize="174" fill="#fff" fontFamily="Liberation Sans, Arial, sans-serif">3.61</text>
        </g>
    </svg>
);

const Viewport = () => (
    <div className="relative flex-1 bg-black border-t border-[#1c3444] overflow-hidden">
        <div className="flex w-[56px] h-[18px] text-[12px] leading-[17px] text-[#0d3b55] bg-[#3bb6df] rounded-br-[3px]">
            <button className="flex-1 text-center">Right</button>
            <button aria-label="View menu" className="flex items-center justify-center w-[11px] border-l border-[#0d3b55]">
                <Icon className="size-[8px]"><path d="M1 7h22L12 19z" fill="#0b1c28" /></Icon>
            </button>
        </div>
        <Pendant />
        <svg viewBox="0 0 24 54" className="absolute right-[30px] top-[9px] w-[24px] h-[54px]" fill="none" aria-hidden="true">
            <path d="M1 5l5-4h12l3 3-3 4H6zM1 5h20M13 1v7M8 8l5 3 5-4" stroke="#3c5cb0" strokeWidth="1.500" />
            <path d="M6 14l7-5 8 5-4 18v16l-3 3h-3l-2-3V32L6 14zM7 17h13M9 32h8M9 47h8" stroke="#e0aa68" strokeWidth="1.700" />
        </svg>
        <svg viewBox="0 0 50 46" className="absolute left-[34px] bottom-[31px] w-[50px] h-[46px] font-['Liberation_Sans',sans-serif]" fill="none" aria-hidden="true">
            <path d="M3 12v28" stroke="#d8964a" strokeWidth="1.500" />
            <path d="M3 40h30" stroke="#2e8a9a" strokeWidth="1.500" />
            <text x="5" y="12" fontSize="14" fill="#d8b48a">z</text>
            <text x="35" y="42" fontSize="14" fill="#3f9cb0">y</text>
        </svg>
    </div>
);

const Workspace = () => (
    <main className="flex flex-1 min-w-0 border-l-2 border-t-2 border-[#f4f4f4] bg-[#b4b4b4]">
        <div className="flex flex-col flex-1 min-w-0 mt-[5px] mb-[8px] ml-[6px] mr-[8px] bg-[#add8e6]">
            <div className="flex h-[63px] ml-[2px] mt-[3px] pl-[2px] border-l border-[#3c6478] font-['Liberation_Sans',Arial,sans-serif] text-[13px] text-[#123c5c]">
                <div className="flex flex-col flex-1 pl-px border-l border-[#3c6478]">
                    <div className="flex h-[43px] bg-[#3cb7e0] border-b border-[#123c5c]">
                        <div className="flex-1 pt-px leading-4 whitespace-pre">{'Second dimension point:\nDimension location ( Vertical  Horizontal ):'}</div>
                        <div className="flex flex-col justify-between items-center w-[17px] bg-[#f0f0f0] py-[3px]">
                            <button aria-label="History up"><ChevronUp className="size-[11px] text-[#333]" strokeWidth={3.500} /></button>
                            <button aria-label="History down"><ChevronDown className="size-[11px] text-[#333]" strokeWidth={3.500} /></button>
                        </div>
                    </div>
                    <div className="flex h-[20px] bg-[#3cb7e0]">
                        <label htmlFor="command" className="font-bold leading-[18px] pr-[4px] border-r border-[#456]">Command:</label>
                        <input id="command" className="flex-1 min-w-0 bg-transparent outline-none" />
                        <div className="flex flex-col justify-between w-[16px] p-px bg-[#e6e6e6]">
                            <button aria-label="Previous command" className="flex items-center justify-center h-[8px] border border-[#aaa]"><Icon className="size-[6px]"><path d="M0 20h24L12 4z" fill="#111" /></Icon></button>
                            <button aria-label="Next command" className="flex items-center justify-center h-[8px] border border-[#aaa]"><Icon className="size-[6px]"><path d="M0 4h24L12 20z" fill="#111" /></Icon></button>
                        </div>
                    </div>
                </div>
            </div>
            <div className="flex items-end h-[26px] pb-px text-[12px] font-['Roboto','Open_Sans',sans-serif]">
                <Tab className="w-[78px]">Perspective</Tab>
                <Tab className="w-[37px]">Top</Tab>
                <Tab className="w-[46px]">Front</Tab>
                <Tab active>Right</Tab>
                <Tab className="w-[31px]"><Icon className="size-[11px]"><path d="M9 2h6v7h7v6h-7v7H9v-7H2V9h7z" stroke="#555" strokeWidth="2" /></Icon></Tab>
            </div>
            <Viewport />
        </div>
    </main>
);

const TaskApp = ({ label, active, children }) => (
    <button aria-label={label} className={clsx('flex items-center justify-center w-[49px] h-10', active && 'bg-[#4b4c51] border-b-2 border-[#b9dff3]')}>
        <Icon>{children}</Icon>
    </button>
);

const Taskbar = () => (
    <footer className="flex items-center h-10 shrink-0 text-white bg-[#1d1d21] font-['Open_Sans','Noto_Sans',sans-serif]">
        <TaskApp label="Start"><path d="M4 6l7-1v7H4zM12 5l8-1v8h-8zM4 13h7v7l-7-1zM12 13h8v8l-8-1z" fill="#fff" /></TaskApp>
        <TaskApp label="Search"><circle cx="12" cy="12" r="6.500" stroke="#fff" strokeWidth="2.400" /></TaskApp>
        <TaskApp label="Edge">
            <circle cx="12" cy="12" r="11.500" fill="#1672c4" /><path d="M1 9C4-2 20-3 23 9c1 6-7 8-9 5 2-5-3-8-7-6-3 1-5 1-6 1z" fill="#3fc6b0" /><path d="M14 14c2 3 9 1 9-5 0-3-2-6-4-7 0 6-2 8-5 12z" fill="#63d95a" /><path d="M9 9c-3 5 2 12 11 10-4 5-12 6-16 1C1 15 4 9 9 9z" fill="#0f4fa0" />
        </TaskApp>
        <TaskApp label="Store">
            <path d="M7 6V2h10v4" stroke="#2b8fd0" strokeWidth="2" /><rect x="1" y="5" width="22" height="18" rx="2" fill="#f4f4f4" /><path d="M7 9h4v4H7z" fill="#d0562c" /><path d="M13 9h4v4h-4z" fill="#6ea52c" /><path d="M7 15h4v4H7z" fill="#2f8ac4" /><path d="M13 15h4v4h-4z" fill="#e0a82c" />
        </TaskApp>
        <TaskApp label="Mail">
            <path d="M0 8l12-7 12 7v15H0z" fill="#1b62a8" /><path d="M2 8h20v8H2z" fill="#e9f3fa" /><path d="M0 9l12 9 12-9v14H0z" fill="#3aa2e2" /><path d="M0 23l12-9 12 9z" fill="#5cc0f0" />
        </TaskApp>
        <TaskApp label="Paint">
            <path d="M2 14C2 7 9 2 16 4c6 2 6 8 4 12-2 3-5 0-7 2s-1 4-5 4c-4 0-6-4-6-8z" fill="#d8e6ee" /><circle cx="7" cy="11" r="1.800" fill="#50a850" /><circle cx="12" cy="8" r="1.800" fill="#e8a840" /><circle cx="6" cy="16" r="1.800" fill="#4878d0" /><circle cx="9" cy="18" r="1.500" fill="#c84848" /><path d="M21 2l-4 20" stroke="#a8743c" strokeWidth="2.500" /><path d="M19 1l5 1-2 5-4-1z" fill="#d8a468" />
        </TaskApp>
        <TaskApp label="Browser">
            <circle cx="12" cy="12" r="11" fill="#6cb944" /><circle cx="12" cy="12" r="5.500" stroke="#f3faee" strokeWidth="2.500" /><circle cx="12" cy="12" r="2.500" fill="#8fca6a" /><path d="M13 8l2-7M15 9l5-7M17 11l7-6" stroke="#f4efe2" strokeWidth="2" />
        </TaskApp>
        <TaskApp label="Files">
            <path d="M1 4h8l2 2h12v15H1z" fill="#e9a92c" /><path d="M1 8h22v13H1z" fill="#fad065" /><path d="M5 22v-8h14v8h-4v-3H9v3z" fill="#3f7f9c" />
        </TaskApp>
        <TaskApp label="Matrix" active>
            <circle cx="12" cy="12" r="11.500" fill="#2fa0c0" /><path d="M1 9l4 7 4-6" stroke="#fff" strokeWidth="1.300" /><circle cx="15" cy="15" r="5" stroke="#fff" strokeWidth="1.300" /><circle cx="16" cy="6" r="4" stroke="#fff" strokeWidth="1.300" />
        </TaskApp>

        <div className="flex items-center ml-auto text-[13px]">
            <span className="text-[12px] mr-[6px]">Desktop</span>
            <button aria-label="More" className="self-start text-[14px] leading-[14px] w-[14px]">»</button>
            <button aria-label="People" className="ml-[17px] mr-[21px]"><Icon className="size-[18px]"><circle cx="8" cy="11" r="4" stroke="#fff" strokeWidth="1.700" /><path d="M2 23c0-5 3-8 6-8s6 3 6 8" stroke="#fff" strokeWidth="1.700" /><circle cx="16" cy="5" r="4" stroke="#fff" strokeWidth="1.700" /><path d="M17 9c3 0 5 3 6 6" stroke="#fff" strokeWidth="1.700" /></Icon></button>
            <button className="flex items-center gap-[8px] ml-[38px]">
                <Icon className="size-[24px]"><path d="M2 4h17v16H2zM19 8h3v12H8M2 8h17" stroke="#fff" strokeWidth="1.800" /><path d="M5 11h5v6H5zM12 11h5M12 14h5M12 17h5" stroke="#fff" strokeWidth="1.500" /></Icon>
                <span>32°C</span><span>Nắng rải rác</span>
            </button>
            <button aria-label="Hidden icons" className="ml-[15px]"><ChevronUp className="size-[16px]" /></button>
            <button aria-label="Network" className="ml-[6px]"><Icon className="size-[18px]"><path d="M7 5h15v11H7M14 16v5M9 21h10M2 2h6v7H2zM5 9v12" stroke="#fff" strokeWidth="1.700" /></Icon></button>
            <button aria-label="Volume" className="ml-[5px]"><Icon className="size-[18px]"><path d="M2 9h4l5-5v16l-5-5H2zM14 9c2 2 2 4 0 6M17 6c4 4 4 8 0 12M20 4c5 5 5 11 0 16" stroke="#fff" strokeWidth="1.400" /></Icon></button>
            <button aria-label="Pen" className="ml-[10px]"><Icon className="size-[18px]"><path d="M8 18L18 3c2-2 5 0 3 3L11 20l-4 2zM2 18c4-6 7-2 5 0s-4 4-5 2M16 14c2-2 4 1 6-1" stroke="#fff" strokeWidth="1.600" /></Icon></button>
            <button aria-label="Keyboard" className="ml-[11px]"><Icon className="size-[23px]"><path d="M1 5h22v13H1z" stroke="#fff" strokeWidth="1.500" /><path d="M4 8.500h17M4 11.500h17" stroke="#fff" strokeWidth="1.500" strokeDasharray="1.500 1.500" /><path d="M6 15h12" stroke="#fff" strokeWidth="1.500" /></Icon></button>
            <time className="w-[60px] ml-[7px] text-center text-[12px] leading-[18px] whitespace-nowrap">10:26 AM<br />8/11/2023</time>
            <button aria-label="1 notification" className="relative ml-[13px] mr-[15px]">
                <Icon className="size-[22px]"><path d="M2 3h19v14h-9l-5 5v-5H2z" fill="#fff" /><path d="M5 7h13M5 10h13M5 13h9" stroke="#333" strokeWidth="1.300" /></Icon>
                <span className="absolute left-[10px] top-[8px] flex items-center justify-center size-[17px] rounded-full bg-[#444] border border-[#888] text-[11px]">1</span>
            </button>
            <span className="w-px h-10 mr-[4px] bg-[#555]" />
        </div>
    </footer>
);

export default function App() {
    return (
        <div className="flex flex-col h-screen overflow-hidden bg-[#333] font-['Open_Sans','Noto_Sans',sans-serif]">
            <IconPaints />
            <header className="font-['Roboto','Open_Sans',sans-serif]">
                <div className="flex items-center h-[23px] bg-white text-[12px] text-[#999]">
                    <Icon className="size-[16px] ml-[2px] mr-[5px]"><circle cx="12" cy="12" r="11.500" fill="#2fa6c0" /><path d="M3 10l4 6 4-6" stroke="#bfe8f0" strokeWidth="1.300" /><circle cx="16" cy="15" r="4.500" stroke="#bfe8f0" /><circle cx="16" cy="7" r="3.500" stroke="#bfe8f0" /></Icon>
                    <h1>Matrix 8.0 (64-bit) - 6550.3dm</h1>
                    <div className="flex items-center gap-[34px] ml-auto mr-[18px] text-[#888]">
                        <button aria-label="Minimise"><Minus className="size-[13px]" strokeWidth={1.500} /></button>
                        <button aria-label="Restore"><Icon className="size-[11px]"><path d="M2 6h15v16H2zM6 6V2h16v16h-5" stroke="#888" strokeWidth="2" /></Icon></button>
                        <button aria-label="Close"><X className="size-[14px]" strokeWidth={1.500} /></button>
                    </div>
                </div>
                <nav className="flex items-center gap-[12px] h-[21px] pl-[7px] bg-[#e8e8e8] text-[11px] text-black">
                    {menus.map((name) => <button key={name}>{name}</button>)}
                </nav>
            </header>
            <div className="flex flex-1 min-h-0">
                <Sidebar />
                <Workspace />
            </div>
            <Taskbar />
        </div>
    );
}
